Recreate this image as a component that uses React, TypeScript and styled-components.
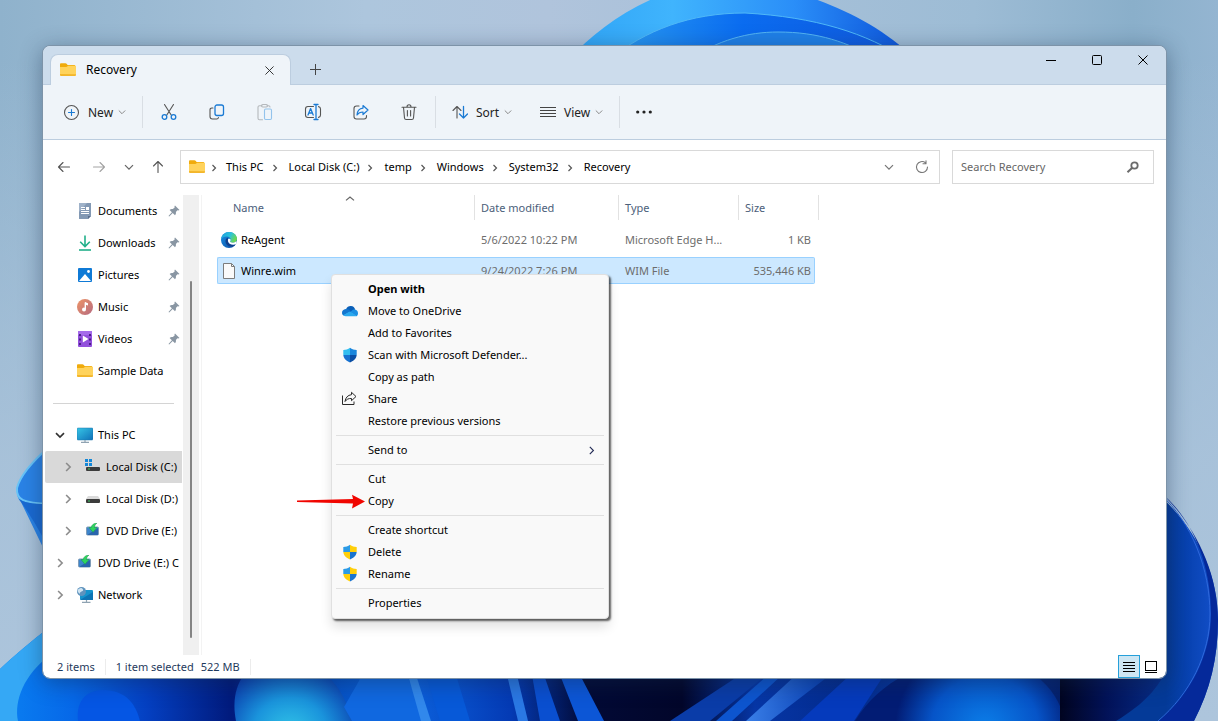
import React from 'react';
import styled, { createGlobalStyle, css } from 'styled-components';

const GlobalStyle = createGlobalStyle`
  *, *::before, *::after { box-sizing: border-box; }
  body { margin: 0; background: #a5c0d8; }
  body, button, input, table {
    font-family: "Segoe UI", "Noto Sans", "Open Sans", sans-serif;
    font-size: 11px;
    line-height: 16px;
    color: #000;
  }
  button { border: 0; padding: 0; background: none; cursor: default; }
  a { color: inherit; text-decoration: none; }
  svg { display: block; flex: none; }
`;

/* ---------- layout ---------- */

const Desktop = styled.main`
  position: relative;
  display: flex;
  min-height: 100vh;
  padding: 45px 51px 42px 42px;
  overflow: hidden;
`;

const Backdrop = styled.svg`
  position: absolute;
  inset: 0;
  width: 100%;
  height: 100%;
`;

const ExplorerWindow = styled.section`
  position: relative;
  display: flex;
  flex: 1;
  min-width: 0;
  flex-direction: column;
  border: 1px solid #7d93a8;
  border-radius: 8px;
  background: #fff;
  background-clip: padding-box;
  box-shadow: 0 4px 22px rgba(20, 40, 70, 0.42);
`;

const TitleBar = styled.header`
  display: flex;
  height: 39px;
  padding-left: 7px;
  border-bottom: 1px solid #bccddf;
  border-radius: 7px 7px 0 0;
  background: #ccdcec;
`;

const Tab = styled.div`
  display: flex;
  align-items: center;
  width: 241px;
  height: 31px;
  margin-top: 8px;
  padding: 0 13px 0 9px;
  gap: 10px;
  border: 1px solid #bccddf;
  border-bottom: 0;
  border-radius: 8px 8px 0 0;
  background: #eff4f9;
`;

const TabTitle = styled.span`
  flex: 1;
  font-size: 12px;
`;

const GlyphButton = styled.button<{ $w: number; $h: number }>`
  display: flex;
  align-items: center;
  justify-content: center;
  width: ${(p) => p.$w}px;
  height: ${(p) => p.$h}px;
  flex: none;
`;

const NewTabSlot = styled.div`
  display: flex;
  flex: 1;
  align-items: center;
  padding: 9px 0 0 8px;
`;

const Toolbar = styled.div`
  display: flex;
  align-items: center;
  height: 55px;
  border-bottom: 1px solid #bccddf;
  background: #eff4f9;
`;

const CommandPad = styled.div<{ $left: number }>`
  display: flex;
  padding-left: ${(p) => p.$left}px;
`;

const CommandButton = styled.button<{ $w: number }>`
  display: flex;
  align-items: center;
  width: ${(p) => p.$w}px;
  height: 32px;
  gap: 5px;
  font-size: 12px;
  color: #222;
  svg:first-child { margin-right: 3px; }
`;

const CommandLabel = styled.span`
  padding-top: 1px;
`;

const Divider = styled.span`
  width: 1px;
  height: 32px;
  margin: 0 2px 0 0;
  background: #d9dee4;
`;

const NavRow = styled.nav`
  display: flex;
  align-items: center;
  height: 51px;
  padding: 3px 12px 0 3px;
`;

const AddressBar = styled.div`
  display: flex;
  flex: 1;
  align-items: center;
  height: 34px;
  margin-left: 6px;
  padding: 0 2px 0 8px;
  border: 1px solid #d9d9d9;
`;

const Crumbs = styled.ol`
  display: flex;
  flex: 1;
  align-items: center;
  margin: 0;
  padding: 0;
  list-style: none;
  white-space: nowrap;
`;

const CrumbArrow = styled.svg`
  width: 8px;
  height: 8px;
  margin: 1px 10px 0 7px;
`;

const Crumb = styled.li`
  display: flex;
  align-items: center;
  &:first-child ${CrumbArrow} { margin: 1px 8px 0 5px; }
`;

const SearchBox = styled.label`
  display: flex;
  align-items: center;
  width: 202px;
  height: 34px;
  margin-left: 12px;
  padding: 0 13px 0 8px;
  border: 1px solid #d9d9d9;
`;

const SearchInput = styled.input`
  flex: 1;
  min-width: 0;
  padding: 0;
  border: 0;
  outline: 0;
  background: none;
  &::placeholder { color: #666; opacity: 1; }
`;

const Body = styled.div`
  display: flex;
  flex: 1;
  min-height: 0;
`;

const Sidebar = styled.aside`
  width: 140px;
  padding: 4px 1px 0 2px;
`;

const Tree = styled.ul`
  margin: 0;
  padding: 0;
  list-style: none;
`;

const TreeRow = styled.a<{ $level: number; $selected?: boolean; $pinned?: boolean }>`
  display: flex;
  align-items: center;
  height: 32px;
  padding-left: ${(p) => 7 + p.$level * 8}px;
  padding-right: ${(p) => (p.$pinned ? 2 : 0)}px;
  white-space: nowrap;
  border-radius: 2px 0 0 2px;
  background: ${(p) => (p.$selected ? '#d9d9d9' : 'none')};
`;

const TreeToggle = styled.span`
  display: flex;
  flex: none;
  justify-content: center;
  width: 16px;
  margin-right: 9px;
`;

const TreeLabel = styled.span`
  flex: 1;
  margin-left: 5px;
`;

const TreeRule = styled.hr`
  height: 1px;
  margin: 16px 8px 15px;
  border: 0;
  background: #d4d4d4;
`;

const ScrollTrack = styled.div`
  display: flex;
  justify-content: center;
  width: 16px;
  margin-top: 4px;
  padding: 86px 0 17px;
  background: #f0f0f0;
`;

const ScrollThumb = styled.div`
  width: 2px;
  border-radius: 1px;
  background: #858585;
`;

const FilePane = styled.div`
  flex: 1;
  min-width: 0;
  margin: 4px 0 0 2px;
  border-left: 1px solid #f3f3f3;
`;

const FileTable = styled.table`
  width: 602px;
  margin: -4px 0 0 15px;
  table-layout: fixed;
  border-collapse: separate;
  border-spacing: 0 4px;
`;

const HeadCell = styled.th`
  height: 27px;
  padding: 0 6px 2px;
  text-align: left;
  font-weight: 400;
  color: #4c607a;
  background: linear-gradient(#e2e2e2, #e2e2e2) right top / 1px 25px no-repeat;
  &:first-child { padding-left: 16px; }
`;

const SortMark = styled.svg`
  float: right;
  margin: -4px 114px 0 0;
`;

const selectedCell = css`
  border-color: #99d1ff;
  background: #cce8ff;
`;

const FileRow = styled.tr<{ $selected?: boolean }>`
  td {
    height: 27px;
    padding: 0 3px 0 6px;
    border: 1px solid transparent;
    border-width: 1px 0;
    white-space: nowrap;
    color: #6d6d6d;
    ${(p) => p.$selected && selectedCell}
  }
  td:first-child { padding-left: 3px; border-left-width: 1px; border-radius: 2px 0 0 2px; }
  td:last-child { text-align: right; border-right-width: 1px; border-radius: 0 2px 2px 0; }
`;

const FileName = styled.span`
  display: flex;
  align-items: center;
  gap: 4px;
  color: #000;
`;

const StatusBar = styled.footer`
  display: flex;
  align-items: center;
  height: 23px;
  padding: 0 4px 0 14px;
  color: #1f3a5c;
`;

const StatusText = styled.span<{ $rule?: boolean }>`
  margin-right: ${(p) => (p.$rule ? 10 : 7)}px;
  padding-right: ${(p) => (p.$rule ? 10 : 0)}px;
  border-right: ${(p) => (p.$rule ? '1px solid #ececec' : '0')};
`;

const ViewButtons = styled.div`
  display: flex;
  margin-left: auto;
`;

const ViewButton = styled.button<{ $on?: boolean }>`
  display: flex;
  align-items: center;
  justify-content: center;
  width: 22px;
  height: 23px;
  border: 1px solid ${(p) => (p.$on ? '#26a0da' : 'transparent')};
  background: ${(p) => (p.$on ? '#cde6f3' : 'none')};
`;

/* ---------- context menu ---------- */

const Menu = styled.ul`
  position: absolute;
  top: 228px;
  left: 288px;
  width: 278px;
  margin: 0;
  padding: 3px 4px 4px;
  list-style: none;
  border: 1px solid #e0e0e0;
  border-radius: 4px;
  background: #f9f9f9;
  box-shadow: 2px 2px 2px rgba(0, 0, 0, 0.6), 0 8px 12px rgba(0, 0, 0, 0.12);
`;

const MenuItem = styled.button<{ $bold?: boolean }>`
  display: flex;
  align-items: center;
  width: 100%;
  height: 22px;
  padding-right: 8px;
  text-align: left;
  font-weight: ${(p) => (p.$bold ? 700 : 400)};
`;

const MenuIcon = styled.span`
  display: flex;
  justify-content: center;
  width: 28px;
  margin-right: 4px;
`;

const MenuText = styled.span`
  flex: 1;
`;

const MenuRule = styled.li`
  height: 1px;
  margin: 3px 0;
  background: #e0e0e0;
`;

const Pointer = styled.svg`
  position: absolute;
  top: 448px;
  left: 254px;
`;

/* ---------- icons ---------- */

const Folder = () => (
  <svg width="16" height="16" viewBox="0 0 16 16">
    <path d="M0 2.500c0-.8.4-1.300 1.200-1.300h4.300c.5 0 .8.200 1.100.600l1 1.200H14c.8 0 1.200.4 1.200 1.200V7H0z" fill="#f0ab0c" />
    <path d="M0 5h6.200c.5 0 .8-.2 1.100-.5l.7-.7H16v9c0 .7-.4 1.100-1.100 1.100H1.100C.4 13.900 0 13.500 0 12.800z" fill="#ffd35c" />
    <path d="M0 12v.8c0 .7.4 1.100 1.100 1.100h13.800c.7 0 1.100-.4 1.100-1.100v-.5z" fill="#f3b62b" />
  </svg>
);

const Chevron = ({ dir, color = '#8a8a8a', size = 8, weight = 1 }: { dir: 'down' | 'right'; color?: string; size?: number; weight?: number }) => (
  <svg width={size} height={size} viewBox="0 0 8 8" fill="none" stroke={color} strokeWidth={weight}>
    <path d={dir === 'down' ? 'M.8 2.500 4 5.700 7.200 2.500' : 'M2.500.8 5.700 4 2.500 7.200'} />
  </svg>
);

const Line = ({ size = 18, children }: { size?: number; children: React.ReactNode }) => (
  <svg width={size} height={size} viewBox={`0 0 ${size} ${size}`} fill="none" stroke="#555" strokeWidth="1.1" strokeLinecap="round" strokeLinejoin="round">
    {children}
  </svg>
);

const CloseGlyph = ({ size, color }: { size: number; color: string }) => (
  <svg width={size} height={size} viewBox="0 0 10 10" stroke={color} strokeWidth="1">
    <path d="M.5.5l9 9M9.500.5l-9 9" />
  </svg>
);

const Cut = () => (
  <Line>
    <path d="M4.500 1.500 11.200 12M13.500 1.500 6.800 12" />
    <circle cx="4.500" cy="14" r="2.300" stroke="#1a7ad4" strokeWidth="1.3" />
    <circle cx="13.500" cy="14" r="2.300" stroke="#1a7ad4" strokeWidth="1.3" />
  </Line>
);

const Copy = () => (
  <Line>
    <path d="M5 5H3.800C2.700 5 2 5.700 2 6.800v6.700C2 14.900 3.100 16 4.500 16h4.200c1 0 1.600-.6 1.800-1.500" />
    <rect x="7" y="2" width="8.500" height="10.500" rx="2" stroke="#1a7ad4" strokeWidth="1.3" />
  </Line>
);

const Paste = () => (
  <Line>
    <g stroke="#b4b8bc">
      <path d="M6 2.800H3.500c-.8 0-1.500.6-1.500 1.500v11c0 .8.7 1.500 1.500 1.500H6.500M11 2.800h1.500c.8 0 1.500.6 1.500 1.200" />
      <rect x="5.500" y="1.500" width="6" height="2.500" rx="1.200" />
    </g>
    <rect x="8.500" y="6" width="7" height="10.500" rx="1.200" stroke="#93c3ec" />
  </Line>
);

const RenameIcon = () => (
  <Line>
    <path d="M9.500 3.500H4C2.600 3.500 1.500 4.600 1.500 6v6c0 1.400 1.100 2.500 2.500 2.500h5.500M14.500 3.600c1.200.2 2 1.200 2 2.400v6c0 1.200-.8 2.200-2 2.400" />
    <path d="M4 12 6.600 5.600 9.200 12M4.900 10h3.500M12 1.500v15M10 1.500h4M10 16.500h4" stroke="#1a7ad4" strokeWidth="1.3" />
  </Line>
);

const ShareIcon = () => (
  <Line>
    <path d="M7 3H4.500C3.100 3 2 4.100 2 5.500v8C2 14.900 3.100 16 4.500 16h7.500c1.400 0 2.500-1.100 2.500-2.500v-1" />
    <path d="M11 2.500 16 7l-5 4.500V9C8.300 9 6.500 9.800 5 12c.2-3.500 2.200-6.500 6-6.900z" stroke="#1a7ad4" strokeWidth="1.2" />
  </Line>
);

const Trash = () => (
  <Line>
    <path d="M2 4.200h14M3.500 4.200l1 10.800c.1.900.7 1.500 1.600 1.500h5.800c.9 0 1.500-.6 1.600-1.500l1-10.800M7 4c0-1.400.8-2.300 2-2.300S11 2.600 11 4M7.400 7.500v5.500M10.600 7.500v5.500" />
  </Line>
);

const Pin = () => (
  <svg width="12" height="12" viewBox="0 0 12 12">
    <path d="M7 .5 11.500 5c-.8.6-1.500.5-2 .3L7.900 7.100c.2 1.300 0 2.300-.9 3.200L4.700 8 1.200 11.600.5 11 3.900 7.200 1.600 4.900c1-.9 2-1.100 3.200-.8l1.900-1.700C6.400 1.800 6.400 1.100 7 .5z" fill="#8996a3" />
  </svg>
);

const DocumentIcon = () => (
  <svg width="16" height="16" viewBox="0 0 16 16">
    <path d="M2 0h12v13l-3 3H2z" fill="#8399b4" />
    <path d="M2 0h8L2 9z" fill="#9fb2c9" />
    <path d="M11 16v-3h3z" fill="#5b6f8e" />
    <path d="M4 4.500h4M4 6.500h4M4 8.500h8M4 10.500h8" stroke="#fff" />
    <rect x="9" y="4" width="3" height="3" fill="#fff" />
  </svg>
);

const DownloadIcon = () => (
  <svg width="16" height="16" viewBox="0 0 16 16" fill="none" stroke="#22b08a" strokeWidth="1.6">
    <path d="M8 .5v10.800M3.200 6.800 8 11.600l4.800-4.800" />
    <path d="M2 15h12" />
  </svg>
);

const PictureIcon = () => (
  <svg width="16" height="16" viewBox="0 0 16 16">
    <rect x="1" y="1" width="14" height="14" rx="1" fill="#0f7ad6" />
    <path d="M2 14 8 7l6 7z" fill="#fff" />
    <circle cx="11.500" cy="4.500" r="1.4" fill="#fff" />
  </svg>
);

const MusicIcon = () => (
  <svg width="16" height="16" viewBox="0 0 16 16">
    <defs>
      <linearGradient id="music" x1="0" y1="0" x2="1" y2="1"><stop stopColor="#ee9567" /><stop offset="1" stopColor="#b56a80" /></linearGradient>
    </defs>
    <circle cx="8" cy="8" r="8" fill="url(#music)" />
    <path d="M8.300 3.500v6.800" stroke="#fff" strokeWidth="1.4" />
    <path d="M8 3l3 1.200v2.200L8 5.400z" fill="#fff" />
    <circle cx="7" cy="10.600" r="2" fill="#fff" />
  </svg>
);

const VideoIcon = () => (
  <svg width="16" height="16" viewBox="0 0 16 16">
    <rect x="1" y="0" width="14" height="16" rx="1" fill="#9250dc" />
    <path d="M1 1a1 1 0 0 1 1-1h12a1 1 0 0 1 1 1v3H1z" fill="#a56bea" />
    <path d="M3 3v11M13 3v11" stroke="#4a1f86" strokeWidth="2" strokeDasharray="2 2.5" />
    <path d="M5.800 4.500 11.500 8l-5.700 3.500z" fill="#fff" />
  </svg>
);

const Monitor = () => (
  <svg width="16" height="16" viewBox="0 0 16 16">
    <defs>
      <linearGradient id="screen" x1="0" y1="0" x2="1" y2="1"><stop stopColor="#37c6e6" /><stop offset="1" stopColor="#0f70b8" /></linearGradient>
    </defs>
    <rect x="0" y="1" width="16" height="12" rx="1" fill="url(#screen)" stroke="#1c76a8" strokeWidth=".5" />
    <path d="M8 13v2M4 15.300h8" stroke="#8fa3b2" strokeWidth="1.2" />
  </svg>
);

const Drive = ({ system }: { system?: boolean }) => (
  <svg width="16" height="16" viewBox="0 0 16 16">
    <path d="M3 5h10l2 3H1z" fill="#dadada" />
    <rect x="1" y="8" width="14" height="4" rx="1" fill="#3c3c3c" />
    <circle cx="4" cy="10" r=".8" fill="#3fe06a" />
    {system && (
      <g>
        <rect x="0" y="0" width="8" height="8" fill="#d9d9d9" />
        <path d="M0 0h3v3H0zM4 0h3v3H4zM0 4h3v3H0zM4 4h3v3H4z" fill="#1488d8" />
      </g>
    )}
  </svg>
);

const DvdIcon = () => (
  <svg width="16" height="16" viewBox="0 0 16 16">
    <rect x="1.500" y="4" width="12" height="8" rx="1" fill="#3e86cc" stroke="#7f9cb8" />
    <path d="M2 12 13 5v7z" fill="#2a65ad" />
    <path d="M12 0C8.500.3 6.500 2 6.300 4.500H4L8 9.300l4-4.800H9.500c0-1.700.8-3.200 2.500-4.500z" fill="#2fd45e" stroke="#15984a" strokeWidth=".5" />
  </svg>
);

const NetworkIcon = () => (
  <svg width="16" height="16" viewBox="0 0 16 16">
    <rect x="3" y="3" width="13" height="10" rx="1" fill="#1593cc" />
    <path d="M3 13 16 5v8z" fill="#0d74b4" />
    <path d="M9.500 13v2M5 15.300h8.500" stroke="#8fa3b2" strokeWidth="1.2" />
    <circle cx="4.500" cy="4.500" r="4.500" fill="#5f93bd" />
    <path d="M1 2.500c2-2 4-2 5 0S3.500 4 3 6 1 5 .5 4z" fill="#cfe4f2" />
  </svg>
);

const EdgeIcon = () => (
  <svg width="16" height="16" viewBox="0 0 16 16">
    <defs>
      <linearGradient id="edgeTop" x1="0" y1="0" x2="1" y2="0.4"><stop stopColor="#1b9de2" /><stop offset=".6" stopColor="#2cc3d8" /><stop offset="1" stopColor="#6ad755" /></linearGradient>
      <linearGradient id="edgeLow" x1="0" y1="0" x2="1" y2="1"><stop stopColor="#1a8fe0" /><stop offset="1" stopColor="#0d4ea6" /></linearGradient>
    </defs>
    <circle cx="8" cy="8" r="8" fill="url(#edgeLow)" />
    <path d="M.1 7C.7 3 4 0 8.100 0 12.700 0 16 3.300 16 6.900c0 2.300-1.700 3.800-4 3.800-1.800 0-2.900-.6-2.900-1.200 0-.4.6-.6.6-1.600C9.700 6 8.200 4.600 5.800 4.600 3 4.600 1 5.800.1 7z" fill="url(#edgeTop)" />
    <path d="M6.800 5.600c-1.500.7-2.300 2-2.300 3.700 0 3 2.500 5.300 5.800 5.300 1.800 0 3.300-.9 4.500-2.300-3 1.300-6.800.2-7.600-2.500-.4-1.400-.2-3-.4-4.200z" fill="#113f8c" />
    <path d="M7.200 6.900c1.200-.6 2.500.1 2.500 1.200 0 .8-.6 1-.6 1.400 0 .6 1.100 1.200 2.900 1.200 1.300 0 2.500-.5 3.300-1.400L15.800 10c-.3.9-.6 1.600-1 2.200-3 1.100-6.500.2-7.500-2.300-.4-1-.5-2.100-.1-3z" fill="#fff" />
  </svg>
);

const FileIcon = () => (
  <svg width="16" height="16" viewBox="0 0 16 16" fill="#fafafa" stroke="#7c7c7c">
    <path d="M2.500.5h8l3 3v12h-11z" />
    <path d="M10.500.5v3h3" fill="none" />
  </svg>
);

const OneDriveIcon = () => (
  <svg width="16" height="16" viewBox="0 0 16 16">
    <path d="M4 6.200C5 3.800 7 2.800 9 3c2.200.2 3.700 1.600 4.200 3.600L8 10z" fill="#0a5fb8" />
    <path d="M3.700 6C1.500 6.200 0 7.700 0 9.700 0 11 .6 12 1.500 12.500L9 8.500C7.500 6.500 5.500 5.800 3.700 6z" fill="#1376cf" />
    <path d="M13 6.500c-1.200-.1-2.500.3-3.500 1.500L8 9.200l6.500 4C15.500 12.700 16 11.600 16 10.300 16 8.200 14.800 6.700 13 6.500z" fill="#1b8fe3" />
    <path d="M1.200 12.300 6.800 9c.7-.3 1.400-.3 2 0l6 4c-.5.2-1 .2-1.600.2H3.800c-1 0-1.900-.3-2.600-.9z" fill="#2aa9ee" />
  </svg>
);

const shieldPath = 'M8 .8C6 2.300 3.800 2.900 1.300 3v4.500C1.300 11.300 4 13.800 8 15.500c4-1.700 6.700-4.200 6.700-8V3C12.200 2.900 10 2.300 8 .8z';

const Shield = ({ id, colors }: { id: string; colors: [string, string, string, string] }) => (
  <svg width="16" height="16" viewBox="0 0 16 16">
    <clipPath id={id}><path d={shieldPath} /></clipPath>
    <g clipPath={`url(#${id})`}>
      <rect width="8" height="8" fill={colors[0]} />
      <rect x="8" width="8" height="8" fill={colors[1]} />
      <rect y="8" width="8" height="8" fill={colors[2]} />
      <rect x="8" y="8" width="8" height="8" fill={colors[3]} />
    </g>
  </svg>
);

const uac: [string, string, string, string] = ['#2b9be6', '#ffcf0a', '#ffcf0a', '#1a74cf'];
const defender: [string, string, string, string] = ['#31bdf0', '#1a86dc', '#1671d0', '#0b4fa5'];

const MenuShare = () => (
  <svg width="16" height="16" viewBox="0 0 16 16" fill="none" stroke="#2b2b2b">
    <path d="M.5 4.500v9h11.500v-3" />
    <path d="M9.500 1.300 14 5.500 9.500 9.700V7.500C6.500 7.300 4.500 8.300 3 10.500 3.500 6.700 5.800 4 9.500 3.700z" />
  </svg>
);

const Lens = () => (
  <svg width="14" height="14" viewBox="0 0 14 14" fill="none" stroke="#6b6b6b">
    <circle cx="8.500" cy="5.500" r="3.200" strokeWidth="1.8" />
    <path d="M6 8 1.500 12.300" strokeWidth="2" />
  </svg>
);

/* ---------- wallpaper ---------- */

const Wallpaper = () => (
  <Backdrop viewBox="0 0 1218 721" preserveAspectRatio="none" aria-hidden="true">
    <defs>
      <linearGradient id="sky" x1="0" y1="0" x2="1" y2="0">
        <stop stopColor="#8fb2cc" /><stop offset=".3" stopColor="#adc6dd" /><stop offset=".45" stopColor="#b0c4dc" /><stop offset=".8" stopColor="#9dbcd5" /><stop offset=".93" stopColor="#8aafca" /><stop offset="1" stopColor="#94b5d1" />
      </linearGradient>
      <linearGradient id="skyLow" x1="0" y1="0" x2="0" y2="1">
        <stop stopColor="#b2c8df" stopOpacity="0" /><stop offset=".6" stopColor="#adc5dc" stopOpacity=".8" /><stop offset="1" stopColor="#adc5dc" />
      </linearGradient>
      <linearGradient id="petalTop" x1="0" y1="0" x2="1" y2="0">
        <stop stopColor="#2fa4f6" /><stop offset=".3" stopColor="#40b4fd" /><stop offset=".65" stopColor="#2a8ef8" /><stop offset="1" stopColor="#0a4fd8" />
      </linearGradient>
      <linearGradient id="petalInner" x1="0" y1="0" x2="1" y2="0">
        <stop stopColor="#2b9df2" /><stop offset=".45" stopColor="#0a6cf0" /><stop offset="1" stopColor="#1158dc" />
      </linearGradient>
      <linearGradient id="floor" x1="0" y1="0" x2="1218" y2="0" gradientUnits="userSpaceOnUse">
        <stop stopColor="#0a80f2" /><stop offset=".06" stopColor="#0668e8" /><stop offset=".12" stopColor="#0440c2" /><stop offset=".19" stopColor="#011a7c" />
        <stop offset=".28" stopColor="#0553c8" /><stop offset=".33" stopColor="#0c64e0" /><stop offset=".42" stopColor="#043ab4" /><stop offset=".48" stopColor="#020a36" /><stop offset=".56" stopColor="#02062a" />
        <stop offset=".62" stopColor="#0636a6" /><stop offset=".7" stopColor="#032a8c" /><stop offset=".78" stopColor="#063fae" /><stop offset=".87" stopColor="#04206c" /><stop offset="1" stopColor="#08308c" />
      </linearGradient>
      <radialGradient id="cyan" cx="290" cy="735" r="75" gradientUnits="userSpaceOnUse">
        <stop stopColor="#33c8e8" /><stop offset=".5" stopColor="#1a94dc" /><stop offset="1" stopColor="#0a3cae" />
      </radialGradient>
      <radialGradient id="glow" cx="985" cy="730" r="90" gradientUnits="userSpaceOnUse">
        <stop stopColor="#0b80ea" /><stop offset=".6" stopColor="#0654c8" /><stop offset="1" stopColor="#021c74" />
      </radialGradient>
      <linearGradient id="bloomRight" x1="1166" y1="0" x2="1218" y2="0" gradientUnits="userSpaceOnUse">
        <stop stopColor="#043a98" /><stop offset=".4" stopColor="#0842b0" /><stop offset="1" stopColor="#1350cc" />
      </linearGradient>
      <linearGradient id="bloomDark" x1="1058" y1="0" x2="1180" y2="0" gradientUnits="userSpaceOnUse">
        <stop stopColor="#01041e" /><stop offset=".4" stopColor="#021258" /><stop offset="1" stopColor="#083496" />
      </linearGradient>
      <linearGradient id="streak" x1="0" y1="0" x2="1" y2="0">
        <stop stopColor="#3a7fe8" /><stop offset="1" stopColor="#043bb0" />
      </linearGradient>
    </defs>
    <rect width="1218" height="721" fill="url(#sky)" />
    <rect y="60" width="1218" height="661" fill="url(#skyLow)" />

    <path d="M568 60C598 28 636 0 690-14h84c50 14 102 34 142 74z" fill="url(#petalTop)" />
    <path d="M608 60C646 30 690 13 745 13c70 4 122 20 162 47z" fill="url(#petalInner)" stroke="#4fb8f8" strokeWidth="1" />
    <path d="M688 60c30-20 60-28 90-28 40 0 70 10 100 28z" fill="#1f80e8" stroke="#54b4f4" strokeWidth="1" />

    <path d="M50 446C34 460 20 476 17 488c0 8 1 11 4 14l29 60z" fill="#2a83e6" />
    <path d="M50 446C34 460 20 476 17 488c-1 12 6 15 33 16" fill="none" stroke="#69c4f8" strokeWidth="2" />
    <path d="M19 499c8 5 18 5 31 5v48C40 530 28 512 19 499z" fill="#1a6ad2" />

    <path d="M0 669C14 656 30 642 50 627V665h1080v56H0z" fill="url(#floor)" />
    <path d="M0 669C14 656 30 642 50 627v28C24 675 14 700 18 721H0z" fill="#35a8f5" />
    <path d="M78 721c-2-18 6-30 24-31 26 0 34 16 38 31z" fill="#0556e4" />
    <path d="M236 721c-4-20 0-36 8-46h82c16 14 22 30 26 46z" fill="url(#cyan)" />
    <path d="M352 721l-8-14c8-14 14-24 18-32h45l18 46z" fill="#1068e0" />
    <path d="M408 675h8l15 46h-10z" fill="#3188ec" />
    <path d="M426 675h30l14 46h-30z" fill="#0759d8" />
    <path d="M507 675h10l11 46h-10z" fill="#2a78e4" />
    <path d="M532 675h12l16 46h-20z" fill="#0a4fd0" />
    <path d="M560 675h20l24 46h-26z" fill="#0c56d6" />
    <path d="M670 721l70-46h26l-56 46z" fill="#0a3ca8" />
    <path d="M716 721l52-46h14l-50 46z" fill="#0d55cf" />
    <path d="M746 721l50-46h34l-60 46z" fill="url(#streak)" />
    <path d="M800 721l50-46h34l-30 46z" fill="#053abc" />
    <path d="M855 721c12-20 30-36 50-46h130c16 12 26 28 30 46z" fill="url(#glow)" />
    <path d="M1060 721V670h130v51z" fill="url(#bloomDark)" />
    <path d="M1150 487c42 34 68 82 68 133 0 38-8 70-24 101h-78c30-18 42-34 50-50l-16-10z" fill="url(#bloomRight)" />
    <path d="M1160 494c32 28 50 76 50 120 0 40-20 80-52 107" fill="none" stroke="#2f68dc" strokeWidth="1" />
    <path d="M1160 492c35 28 51 76 51 122 0 40-20 80-52 107h35c16-31 24-63 24-101 0-51-26-99-58-128z" fill="#05299a" />
  </Backdrop>
);

/* ---------- data ---------- */

const crumbs = ['This PC', 'Local Disk (C:)', 'temp', 'Windows', 'System32', 'Recovery'];

const places = [
  { name: 'Documents', icon: <DocumentIcon />, pin: true },
  { name: 'Downloads', icon: <DownloadIcon />, pin: true },
  { name: 'Pictures', icon: <PictureIcon />, pin: true },
  { name: 'Music', icon: <MusicIcon />, pin: true },
  { name: 'Videos', icon: <VideoIcon />, pin: true },
  { name: 'Sample Data', icon: <Folder />, pin: false },
];

const tree = [
  { name: 'This PC', icon: <Monitor />, level: 0, open: true },
  { name: 'Local Disk (C:)', icon: <Drive system />, level: 1, selected: true },
  { name: 'Local Disk (D:)', icon: <Drive />, level: 1 },
  { name: 'DVD Drive (E:)', icon: <DvdIcon />, level: 1 },
  { name: 'DVD Drive (E:) C', icon: <DvdIcon />, level: 0 },
  { name: 'Network', icon: <NetworkIcon />, level: 0 },
];

const files = [
  { name: 'ReAgent', icon: <EdgeIcon />, date: '5/6/2022 10:22 PM', type: 'Microsoft Edge H...', size: '1 KB', selected: false },
  { name: 'Winre.wim', icon: <FileIcon />, date: '9/24/2022 7:26 PM', type: 'WIM File', size: '535,446 KB', selected: true },
];

type Entry = { label: string; icon?: React.ReactNode; bold?: boolean; more?: boolean } | null;

const menu: Entry[] = [
  { label: 'Open with', bold: true },
  { label: 'Move to OneDrive', icon: <OneDriveIcon /> },
  { label: 'Add to Favorites' },
  { label: 'Scan with Microsoft Defender...', icon: <Shield id="defender" colors={defender} /> },
  { label: 'Copy as path' },
  { label: 'Share', icon: <MenuShare /> },
  { label: 'Restore previous versions' },
  null,
  { label: 'Send to', more: true },
  null,
  { label: 'Cut' },
  { label: 'Copy' },
  null,
  { label: 'Create shortcut' },
  { label: 'Delete', icon: <Shield id="uacDelete" colors={uac} /> },
  { label: 'Rename', icon: <Shield id="uacRename" colors={uac} /> },
  null,
  { label: 'Properties' },
];

const commands = [
  { label: 'Cut', icon: <Cut /> },
  { label: 'Copy', icon: <Copy /> },
  { label: 'Paste', icon: <Paste /> },
  { label: 'Rename', icon: <RenameIcon /> },
  { label: 'Share', icon: <ShareIcon /> },
  { label: 'Delete', icon: <Trash /> },
];

/* ---------- page ---------- */

export default function App() {
  return (
    <>
      <GlobalStyle />
      <Desktop>
        <Wallpaper />
        <ExplorerWindow>
          <TitleBar>
            <Tab>
              <Folder />
              <TabTitle>Recovery</TabTitle>
              <GlyphButton $w={16} $h={16} aria-label="Close tab"><CloseGlyph size={9} color="#222" /></GlyphButton>
            </Tab>
            <NewTabSlot>
              <GlyphButton $w={32} $h={24} aria-label="New tab">
                <svg width="11" height="11" viewBox="0 0 11 11" stroke="#444"><path d="M5.500 0v11M0 5.500h11" /></svg>
              </GlyphButton>
            </NewTabSlot>
            <GlyphButton $w={46} $h={28} aria-label="Minimize">
              <svg width="10" height="10" viewBox="0 0 10 10" stroke="#000"><path d="M0 5.500h10" /></svg>
            </GlyphButton>
            <GlyphButton $w={46} $h={28} aria-label="Maximize">
              <svg width="10" height="10" viewBox="0 0 10 10" fill="none" stroke="#000"><rect x=".5" y=".5" width="9" height="9" rx="1" /></svg>
            </GlyphButton>
            <GlyphButton $w={46} $h={28} aria-label="Close"><CloseGlyph size={10} color="#000" /></GlyphButton>
          </TitleBar>

          <Toolbar>
            <CommandPad $left={20}>
              <CommandButton $w={79}>
                <Line size={17}>
                  <circle cx="8.500" cy="8.500" r="7" />
                  <path d="M8.500 5.500v6M5.500 8.500h6" stroke="#1a7ad4" />
                </Line>
                <CommandLabel>New</CommandLabel>
                <Chevron dir="down" />
              </CommandButton>
            </CommandPad>
            <Divider />
            {commands.map((c) => (
              <GlyphButton key={c.label} $w={48} $h={32} aria-label={c.label}>{c.icon}</GlyphButton>
            ))}
            <CommandPad $left={2}><Divider /></CommandPad>
            <CommandPad $left={14}>
              <CommandButton $w={88}>
                <Line size={16}>
                  <path d="M5 14V2.500M1 6.500l4-4 4 4" />
                  <path d="M11.500 2.500V14M7.500 10l4 4 4-4" stroke="#1a7ad4" strokeWidth="1.3" />
                </Line>
                <CommandLabel>Sort</CommandLabel>
                <Chevron dir="down" />
              </CommandButton>
              <CommandButton $w={79}>
                <svg width="16" height="16" viewBox="0 0 16 16" stroke="#444"><path d="M0 3.500h16M0 6.500h16M0 9.500h16M0 12.500h16" /></svg>
                <CommandLabel>View</CommandLabel>
                <Chevron dir="down" />
              </CommandButton>
            </CommandPad>
            <Divider />
            <GlyphButton $w={44} $h={32} aria-label="See more">
              <svg width="16" height="4" viewBox="0 0 16 4" fill="#222"><circle cx="1.700" cy="2" r="1.600" /><circle cx="8" cy="2" r="1.600" /><circle cx="14.300" cy="2" r="1.600" /></svg>
            </GlyphButton>
          </Toolbar>

          <NavRow>
            <GlyphButton $w={35} $h={32} aria-label="Back">
              <Line size={14}><path d="M12.500 7H1.500M6 2.500 1.500 7 6 11.500" /></Line>
            </GlyphButton>
            <GlyphButton $w={35} $h={32} aria-label="Forward">
              <Line size={14}><path d="M1.500 7h11M8 2.500 12.500 7 8 11.500" stroke="#a3a3a3" /></Line>
            </GlyphButton>
            <GlyphButton $w={26} $h={32} aria-label="Recent locations"><Chevron dir="down" color="#666" size={10} /></GlyphButton>
            <GlyphButton $w={32} $h={32} aria-label="Up">
              <Line size={14}><path d="M7 12.500V1.500M2.500 6 7 1.500 11.500 6" /></Line>
            </GlyphButton>
            <AddressBar>
              <Folder />
              <Crumbs>
                {crumbs.map((c) => (
                  <Crumb key={c}>
                    <CrumbArrow viewBox="0 0 8 8" fill="none" stroke="#555" strokeWidth="1.2"><path d="M2.500 1 5.500 4 2.500 7" /></CrumbArrow>
                    <a href="#">{c}</a>
                  </Crumb>
                ))}
              </Crumbs>
              <GlyphButton $w={36} $h={30} aria-label="Previous locations"><Chevron dir="down" color="#777" size={10} /></GlyphButton>
              <GlyphButton $w={30} $h={30} aria-label="Refresh">
                <Line size={14}><path d="M12.500 7A5.500 5.500 0 1 1 10.500 2.800M11 .8v3H8" stroke="#777" /></Line>
              </GlyphButton>
            </AddressBar>
            <SearchBox>
              <SearchInput placeholder="Search Recovery" aria-label="Search Recovery" />
              <Lens />
            </SearchBox>
          </NavRow>

          <Body>
            <Sidebar>
              <Tree>
                {places.map((p) => (
                  <li key={p.name}>
                    <TreeRow href="#" $level={0} $pinned={p.pin}>
                      <TreeToggle />
                      {p.icon}
                      <TreeLabel>{p.name}</TreeLabel>
                      {p.pin && <Pin />}
                    </TreeRow>
                  </li>
                ))}
              </Tree>
              <TreeRule />
              <Tree>
                {tree.map((t) => (
                  <li key={t.name}>
                    <TreeRow href="#" $level={t.level} $selected={t.selected}>
                      <TreeToggle>
                        <Chevron dir={t.open ? 'down' : 'right'} color={t.open ? '#333' : '#8c8c8c'} size={10} weight={1.3} />
                      </TreeToggle>
                      {t.icon}
                      <TreeLabel>{t.name}</TreeLabel>
                    </TreeRow>
                  </li>
                ))}
              </Tree>
            </Sidebar>
            <ScrollTrack aria-hidden="true"><ScrollThumb /></ScrollTrack>
            <FilePane>
              <FileTable>
                <colgroup>
                  <col width="258" /><col width="144" /><col width="120" /><col width="76" /><col width="4" />
                </colgroup>
                <thead>
                  <tr>
                    <HeadCell>Name<SortMark width="10" height="10" viewBox="0 0 8 8" fill="none" stroke="#666"><path d="M.8 3.500 4 .8 7.200 3.500" /></SortMark></HeadCell>
                    <HeadCell>Date modified</HeadCell>
                    <HeadCell>Type</HeadCell>
                    <HeadCell colSpan={2}>Size</HeadCell>
                  </tr>
                </thead>
                <tbody>
                  {files.map((f) => (
                    <FileRow key={f.name} $selected={f.selected}>
                      <td><FileName>{f.icon}{f.name}</FileName></td>
                      <td>{f.date}</td>
                      <td>{f.type}</td>
                      <td>{f.size}</td>
                    </FileRow>
                  ))}
                </tbody>
              </FileTable>
            </FilePane>
          </Body>

          <StatusBar>
            <StatusText $rule>2 items</StatusText>
            <StatusText>1 item selected</StatusText>
            <StatusText $rule>522 MB</StatusText>
            <ViewButtons>
              <ViewButton $on aria-label="Details view">
                <svg width="12" height="12" viewBox="0 0 12 12" stroke="#000"><path d="M0 1.500h12M0 4.500h12M0 7.500h12M0 10.500h12" /></svg>
              </ViewButton>
              <ViewButton aria-label="Large icons view">
                <svg width="12" height="12" viewBox="0 0 12 12" fill="none" stroke="#000"><rect x=".5" y=".5" width="11" height="9" /><path d="M0 11.500h12" /></svg>
              </ViewButton>
            </ViewButtons>
          </StatusBar>

          <Menu>
            {menu.map((m, i) =>
              m ? (
                <li key={i}>
                  <MenuItem $bold={m.bold}>
                    <MenuIcon>{m.icon}</MenuIcon>
                    <MenuText>{m.label}</MenuText>
                    {m.more && <Chevron dir="right" color="#222a55" size={9} />}
                  </MenuItem>
                </li>
              ) : (
                <MenuRule key={i} role="separator" />
              ),
            )}
          </Menu>

          <Pointer width="70" height="16" viewBox="0 0 70 16" aria-hidden="true">
            <path d="M0 6.500 56 5 55 .8 68 7.500 55 14.500 56 9.500 0 8z" fill="#f00500" />
          </Pointer>
        </ExplorerWindow>
      </Desktop>
    </>
  );
}
